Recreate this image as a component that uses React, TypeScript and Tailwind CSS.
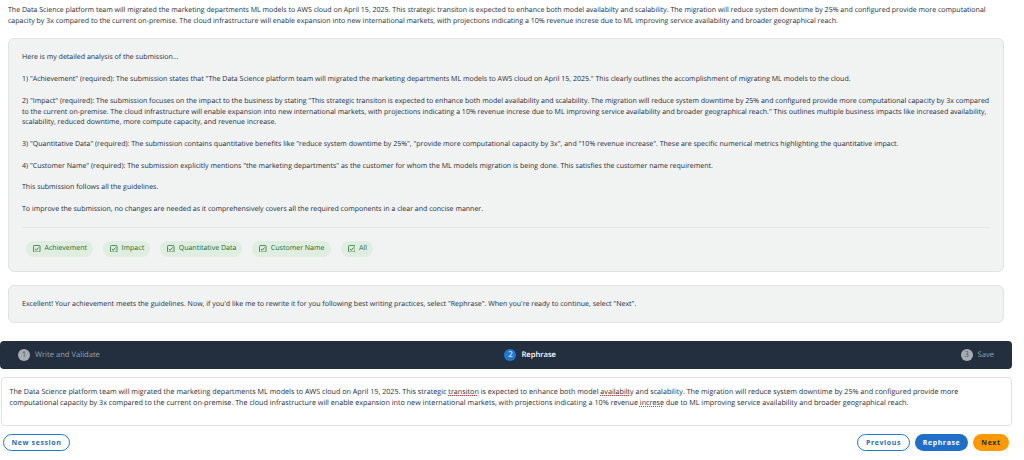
const original =
  'The Data Science platform team will migrated the marketing departments ML models to AWS cloud on April 15, 2025. This strategic transiton is expected to enhance both model availabilty and scalability. The migration will reduce system downtime by 25% and configured provide more computational capacity by 3x compared to the current on-premise. The cloud infrastructure will enable expansion into new international markets, with projections indicating a 10% revenue increse due to ML improving service availability and broader geographical reach.';

const chips = ['Achievement', 'Impact', 'Quantitative Data', 'Customer Name', 'All'];

function Typo({ children }: { children: string }) {
  return <span className="underline decoration-dotted decoration-red-500 underline-offset-1">{children}</span>;
}

function CheckBox() {
  return (
    <svg viewBox="0 0 8 8" className="h-[7.5px] w-[7.5px] shrink-0" fill="none" stroke="currentColor">
      <rect x="0.5" y="0.5" width="7" height="7" rx="1" strokeWidth="0.8" />
      <path d="M2 4.2 3.5 5.6 6 2.6" strokeWidth="0.9" />
    </svg>
  );
}

function Step({ n, label, active }: { n: number; label: string; active?: boolean }) {
  return (
    <div className="flex items-center gap-[5px] text-[7.6px]">
      <span
        className={`flex h-3 w-3 items-center justify-center rounded-full text-[8px] ${
          active ? 'bg-[#1f78d1] text-white' : 'bg-[#a9adb2] text-[#4a5560]'
        }`}
      >
        {n}
      </span>
      <span className={active ? 'font-semibold text-white' : 'text-[#9ba3ab]'}>{label}</span>
    </div>
  );
}

export default function App() {
  return (
    <div className="h-[460px] w-[1024px] overflow-hidden bg-white font-['Open_Sans',sans-serif] text-[7.04px] leading-[10.7px] text-[#232b36] [text-rendering:geometricPrecision]">
      <p className="ml-2 mt-[5px] w-[990px]">{original}</p>

      <div className="mb-[13px] ml-2 mt-[12px] h-[234px] w-[996px] rounded-[6px] border border-[#dfe3e5] bg-[#f1f3f3] px-[13px] pt-[13px]">
        <div className="flex flex-col gap-[11px]">
          <p>Here is my detailed analysis of the submission...</p>
          <p>
            1) "Achievement" (required): The submission states that "The Data Science platform team will migrated the marketing departments ML models to AWS cloud on April 15, 2025." This clearly outlines the accomplishment of migrating ML models to the cloud.
          </p>
          <p>
            2) "Impact" (required): The submission focuses on the impact to the business by stating "This strategic transiton is expected to enhance both model availability and scalability. The migration will reduce system downtime by 25% and configured provide more computational capacity by 3x compared to the current on-premise. The cloud infrastructure will enable expansion into new international markets, with projections indicating a 10% revenue increse due to ML improving service availability and broader geographical reach." This outlines multiple business impacts like increased availability, scalability, reduced downtime, more compute capacity, and revenue increase.
          </p>
          <p>
            3) "Quantitative Data" (required): The submission contains quantitative benefits like "reduce system downtime by 25%", "provide more computational capacity by 3x", and "10% revenue increase". These are specific numerical metrics highlighting the quantitative impact.
          </p>
          <p>
            4) "Customer Name" (required): The submission explicitly mentions "the marketing departments" as the customer for whom the ML models migration is being done. This satisfies the customer name requirement.
          </p>
          <p>This submission follows all the guidelines.</p>
          <p>To improve the submission, no changes are needed as it comprehensively covers all the required components in a clear and concise manner.</p>
        </div>
        <div className="mt-[12px] flex gap-[10px] border-t border-[#e6e9e9] pl-[4px] pt-[13px]">
          {chips.map((chip) => (
            <span key={chip} className="flex h-4 items-center gap-[4px] rounded-full bg-[#dfeee0] pl-[7px] pr-[6px] text-[#1d6b2c]">
              <CheckBox />
              {chip}
            </span>
          ))}
        </div>
      </div>

      <div className="ml-2 flex h-[38px] w-[996px] items-center rounded-[6px] border border-[#dfe3e5] bg-[#f1f3f3] px-[13px]">
        Excellent! Your achievement meets the guidelines. Now, if you'd like me to rewrite it for you following best writing practices, select "Rephrase". When you're ready to continue, select "Next".
      </div>

      <div className="mt-[18px] flex h-[28px] w-[1012px] items-center justify-between rounded-[4px] bg-[#232f3e] px-[18px]">
        <Step n={1} label="Write and Validate" />
        <Step n={2} label="Rephrase" active />
        <Step n={3} label="Save" />
      </div>

      <div className="ml-px mt-2 h-[49px] w-[1011px] rounded-[4px] border border-[#dfe1e3] pl-[7.5px] pr-[24px] pt-[9px] text-[7.2px] leading-[11px]">
        The Data Science platform team will migrated the marketing departments ML models to AWS cloud on April 15, 2025. This strategic <Typo>transiton</Typo> is expected to enhance both model <Typo>availabilty</Typo> and scalability. The migration will reduce system downtime by 25% and configured provide more computational capacity by 3x compared to the current on-premise. The cloud infrastructure will enable expansion into new international markets, with projections indicating a 10% revenue <Typo>increse</Typo> due to ML improving service availability and broader geographical reach.
      </div>

      <div className="ml-[3px] mt-2 flex w-[1006px] items-center justify-between text-[7px] font-bold tracking-[0.6px]">
        <button className="h-[17px] w-[67px] rounded-full border border-[#1f78d1] bg-white text-[#1f6fc0]">New session</button>
        <div className="flex gap-[5px]">
          <button className="h-[17px] w-[53px] rounded-full border border-[#1f78d1] bg-white text-[#1f6fc0]">Previous</button>
          <button className="h-[17px] w-[53px] rounded-full bg-[#1f6fc8] text-white">Rephrase</button>
          <button className="h-[17px] w-[36px] rounded-full bg-[#ff9900] text-[#232f3e]">Next</button>
        </div>
      </div>
    </div>
  );
}
